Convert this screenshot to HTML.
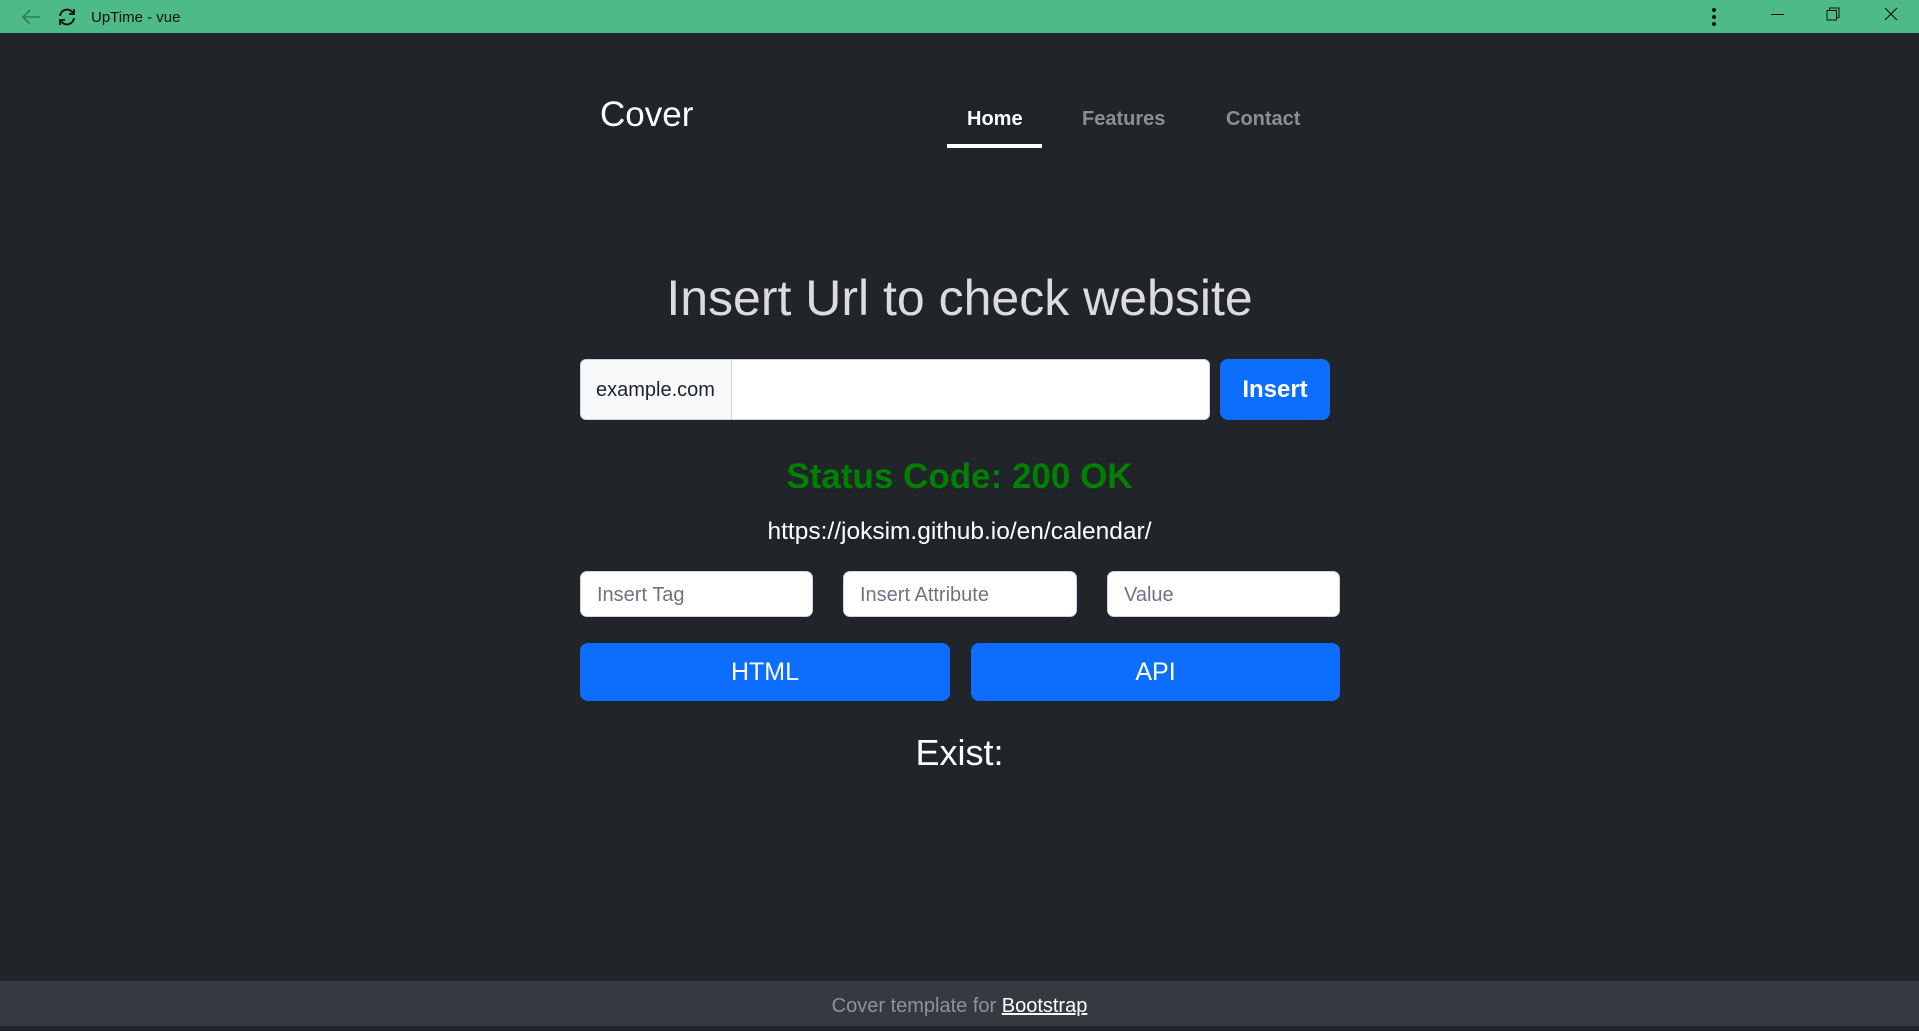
<!DOCTYPE html>
<html><head><meta charset="utf-8"><style>
*{box-sizing:border-box;margin:0;padding:0}
body{width:1919px;height:1026px;overflow:hidden;background:#212529;font-family:"Liberation Sans",Arial,sans-serif;position:relative;color:#fff}
.tb{position:absolute;left:0;top:0;width:1919px;height:33px;background:#4dba87}
.abs{position:absolute;white-space:nowrap}
.c{left:0;width:1919px;text-align:center}
.inp{position:absolute;background:#fff;border:1px solid #ced4da;border-radius:7px;color:#6c757d;font-size:20px;padding-left:16px;line-height:47px;height:46px}
.btn{position:absolute;background:#0d6efd;border-radius:8px;color:#fff;text-align:center}
</style></head><body>
<div class="tb">
<svg class="abs" style="left:20px;top:7px" width="22" height="20" viewBox="0 0 22 20"><path d="M20 10H3M10 3L3 10l7 7" stroke="#2f7d58" stroke-width="1.6" fill="none"/></svg>
<svg class="abs" style="left:57px;top:7px" width="20" height="20" viewBox="0 0 20 20"><path d="M3 9a7 7 0 0 1 13-3M17 11a7 7 0 0 1-13 3" stroke="#111" stroke-width="1.8" fill="none"/><path d="M17 2v5h-5M3 18v-5h5" stroke="#111" stroke-width="1.8" fill="none"/></svg>
<div class="abs" style="left:91px;top:9px;font-size:15px;color:#111">UpTime - vue</div>
<div class="abs" style="left:1712px;top:8px;width:4px;height:18px"><div style="width:4px;height:4px;border-radius:2px;background:#111;margin-bottom:3px"></div><div style="width:4px;height:4px;border-radius:2px;background:#111;margin-bottom:3px"></div><div style="width:4px;height:4px;border-radius:2px;background:#111"></div></div>
<div class="abs" style="left:1771px;top:14px;width:13px;height:1px;background:#111"></div>
<svg class="abs" style="left:1826px;top:7px" width="14" height="14" viewBox="0 0 14 14"><rect x="1" y="3.5" width="9.5" height="9.5" fill="none" stroke="#111"/><path d="M3.5 3.5V1h9.5v9.5h-2.5" fill="none" stroke="#111"/></svg>
<svg class="abs" style="left:1884px;top:7px" width="14" height="14" viewBox="0 0 14 14"><path d="M1 1l12 12M13 1L1 13" stroke="#111" stroke-width="1.2"/></svg>
</div>
<div class="abs" style="left:600px;top:95px;font-size:35px;line-height:40px">Cover</div>
<div class="abs" style="left:967px;top:108px;font-size:20px;font-weight:bold">Home</div>
<div class="abs" style="left:947px;top:144px;width:95px;height:4px;background:#fff"></div>
<div class="abs" style="left:1082px;top:108px;font-size:20px;font-weight:bold;color:#8c8e90">Features</div>
<div class="abs" style="left:1226px;top:108px;font-size:20px;font-weight:bold;color:#8c8e90">Contact</div>
<div class="abs c" style="top:269px;font-size:50px;line-height:58px;color:#dcdcdc">Insert Url to check website</div>
<div class="abs" style="left:580px;top:359px;width:630px;height:61px;background:#fff;border:1px solid #ced4da;border-radius:6px;overflow:hidden">
<div style="width:151px;height:100%;background:#f8f9fa;border-right:1px solid #ced4da;color:#212529;font-size:20px;line-height:60px;padding-left:15px">example.com</div></div>
<div class="btn" style="left:1220px;top:359px;width:110px;height:61px;font-size:24px;font-weight:bold;line-height:62px">Insert</div>
<div class="abs c" style="top:457px;font-size:35px;font-weight:bold;color:#008000;line-height:40px">Status Code: 200 OK</div>
<div class="abs c" style="top:518px;font-size:24.5px;line-height:28px">https://joksim.github.io/en/calendar/</div>
<div class="inp" style="left:580px;top:571px;width:233px">Insert Tag</div>
<div class="inp" style="left:843px;top:571px;width:234px">Insert Attribute</div>
<div class="inp" style="left:1107px;top:571px;width:233px">Value</div>
<div class="btn" style="left:580px;top:643px;width:370px;height:58px;font-size:25px;line-height:59px">HTML</div>
<div class="btn" style="left:971px;top:643px;width:369px;height:58px;font-size:25px;line-height:59px">API</div>
<div class="abs c" style="top:732px;font-size:36px;line-height:42px">Exist:</div>
<div class="abs" style="left:0;top:981px;width:1919px;height:45px;background:#343a40;text-align:center;font-size:20px;line-height:50px;color:#8f9396">Cover template for <span style="color:#fff;text-decoration:underline">Bootstrap</span></div>
</body></html>
